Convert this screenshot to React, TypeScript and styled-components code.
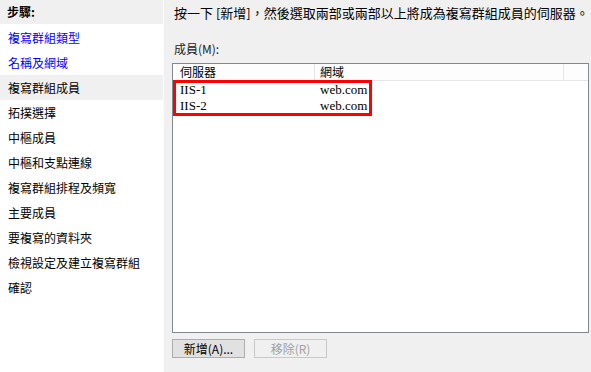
import React from 'react';
import styled, { createGlobalStyle } from 'styled-components';

const GlobalStyle = createGlobalStyle`
    html, body {
        margin: 0;
        padding: 0;
        background: #f0f0f0;
    }

    body {
        font: 13px "Liberation Serif", "Noto Sans CJK TC", serif;
        color: #000;
    }
`

const steps = [
    {label: '複寫群組類型', link: true},
    {label: '名稱及網域', link: true},
    {label: '複寫群組成員', active: true},
    {label: '拓撲選擇'},
    {label: '中樞成員'},
    {label: '中樞和支點連線'},
    {label: '複寫群組排程及頻寬'},
    {label: '主要成員'},
    {label: '要複寫的資料夾'},
    {label: '檢視設定及建立複寫群組'},
    {label: '確認'},
];

const members = [
    {server: 'IIS-1', domain: 'web.com'},
    {server: 'IIS-2', domain: 'web.com'},
];

export default function App() {
    return (
        <>
            <GlobalStyle/>
            <Wizard>
                <StepPanel>
                    <StepHeader>步驟:</StepHeader>
                    <StepList>
                        {steps.map(s => (
                            <Step key={s.label} $link={s.link} $active={s.active}>{s.label}</Step>
                        ))}
                    </StepList>
                </StepPanel>
                <Content>
                    <Intro>按一下 [新增]，然後選取兩部或兩部以上將成為複寫群組成員的伺服器。</Intro>
                    <FieldLabel>成員(M):</FieldLabel>
                    <ListBox>
                        <ListHeader>
                            <HeaderCell $width={142}>伺服器</HeaderCell>
                            <HeaderCell $width={249}>網域</HeaderCell>
                        </ListHeader>
                        <Rows>
                            {members.map(m => (
                                <Row key={m.server}>
                                    <Cell $width={142}>{m.server}</Cell>
                                    <Cell>{m.domain}</Cell>
                                </Row>
                            ))}
                            <Highlight/>
                        </Rows>
                    </ListBox>
                    <Buttons>
                        <Button>新增(A)...</Button>
                        <Button disabled>移除(R)</Button>
                    </Buttons>
                </Content>
            </Wizard>
        </>
    );
}

const Wizard = styled.div`
    display: flex;
    width: 591px;
    height: 372px;
    overflow: hidden;
`

const StepPanel = styled.div`
    width: 163px;
    flex-shrink: 0;
    background: #fff;
    border-right: 1px solid #fafafa;
    font-family: "Noto Sans CJK TC", sans-serif;
    font-size: 12px;
`

const StepHeader = styled.div`
    height: 24px;
    line-height: 24px;
    padding-left: 7px;
    background: #f0f0f0;
    font-weight: bold;
`

const StepList = styled.div`
    padding-top: 1px;
`

const Step = styled.div<{ $link?: boolean; $active?: boolean }>`
    height: 25px;
    line-height: 25px;
    padding-left: 8px;
    color: ${p => p.$link ? '#0000ff' : '#000'};
    background: ${p => p.$active ? '#f0f0f0' : 'transparent'};
`

const Content = styled.div`
    flex: 1;
    display: flex;
    flex-direction: column;
    padding: 3px 17px 0 8px;
    font-size: 12px;
`

const Intro = styled.div`
    font: 13px "Noto Sans CJK TC", sans-serif;
    height: 20px;
    line-height: 20px;
    padding-left: 2px;
    white-space: nowrap;
`

const FieldLabel = styled.div`
    margin-top: 16px;
    height: 20px;
    line-height: 20px;
    padding-left: 2px;
    font-family: "Noto Sans CJK TC", sans-serif;
    color: #222;
`

const ListBox = styled.div`
    margin-top: 4px;
    height: 268px;
    border: 1px solid #828790;
    background: #fff;
    display: flex;
    flex-direction: column;
`

const ListHeader = styled.div`
    display: flex;
    height: 16px;
    border-bottom: 1px solid #e5e5e5;
    background: #fdfdfd;
`

const HeaderCell = styled.div<{ $width: number }>`
    width: ${p => p.$width}px;
    padding-left: 7px;
    box-sizing: border-box;
    border-right: 1px solid #e5e5e5;
    line-height: 16px;
    font-family: "Noto Sans CJK TC", sans-serif;

    & + & {
        padding-left: 5px;
    }
`

const Rows = styled.div`
    position: relative;
    padding-top: 1px;
`

const Row = styled.div`
    display: flex;
    height: 16px;
    line-height: 16px;
    font-size: 13px;
`

const Cell = styled.div<{ $width?: number }>`
    width: ${p => p.$width ? `${p.$width}px` : 'auto'};
    padding-left: 7px;
    box-sizing: border-box;

    & + & {
        padding-left: 5px;
    }
`

const Highlight = styled.div`
    position: absolute;
    left: 0;
    top: -1px;
    width: 199px;
    height: 36px;
    box-sizing: border-box;
    border: 3px solid #ff0000;
`

const Buttons = styled.div`
    display: flex;
    gap: 9px;
    margin-top: 6px;
`

const Button = styled.button`
    width: 73px;
    height: 19px;
    padding: 0;
    font: 12px "Noto Sans CJK TC", sans-serif;
    color: #000;
    background: #e1e1e1;
    border: 1px solid #adadad;

    &:disabled {
        color: #a0a0a0;
        background: #f0f0f0;
        border-color: #c8c8c8;
    }
`
